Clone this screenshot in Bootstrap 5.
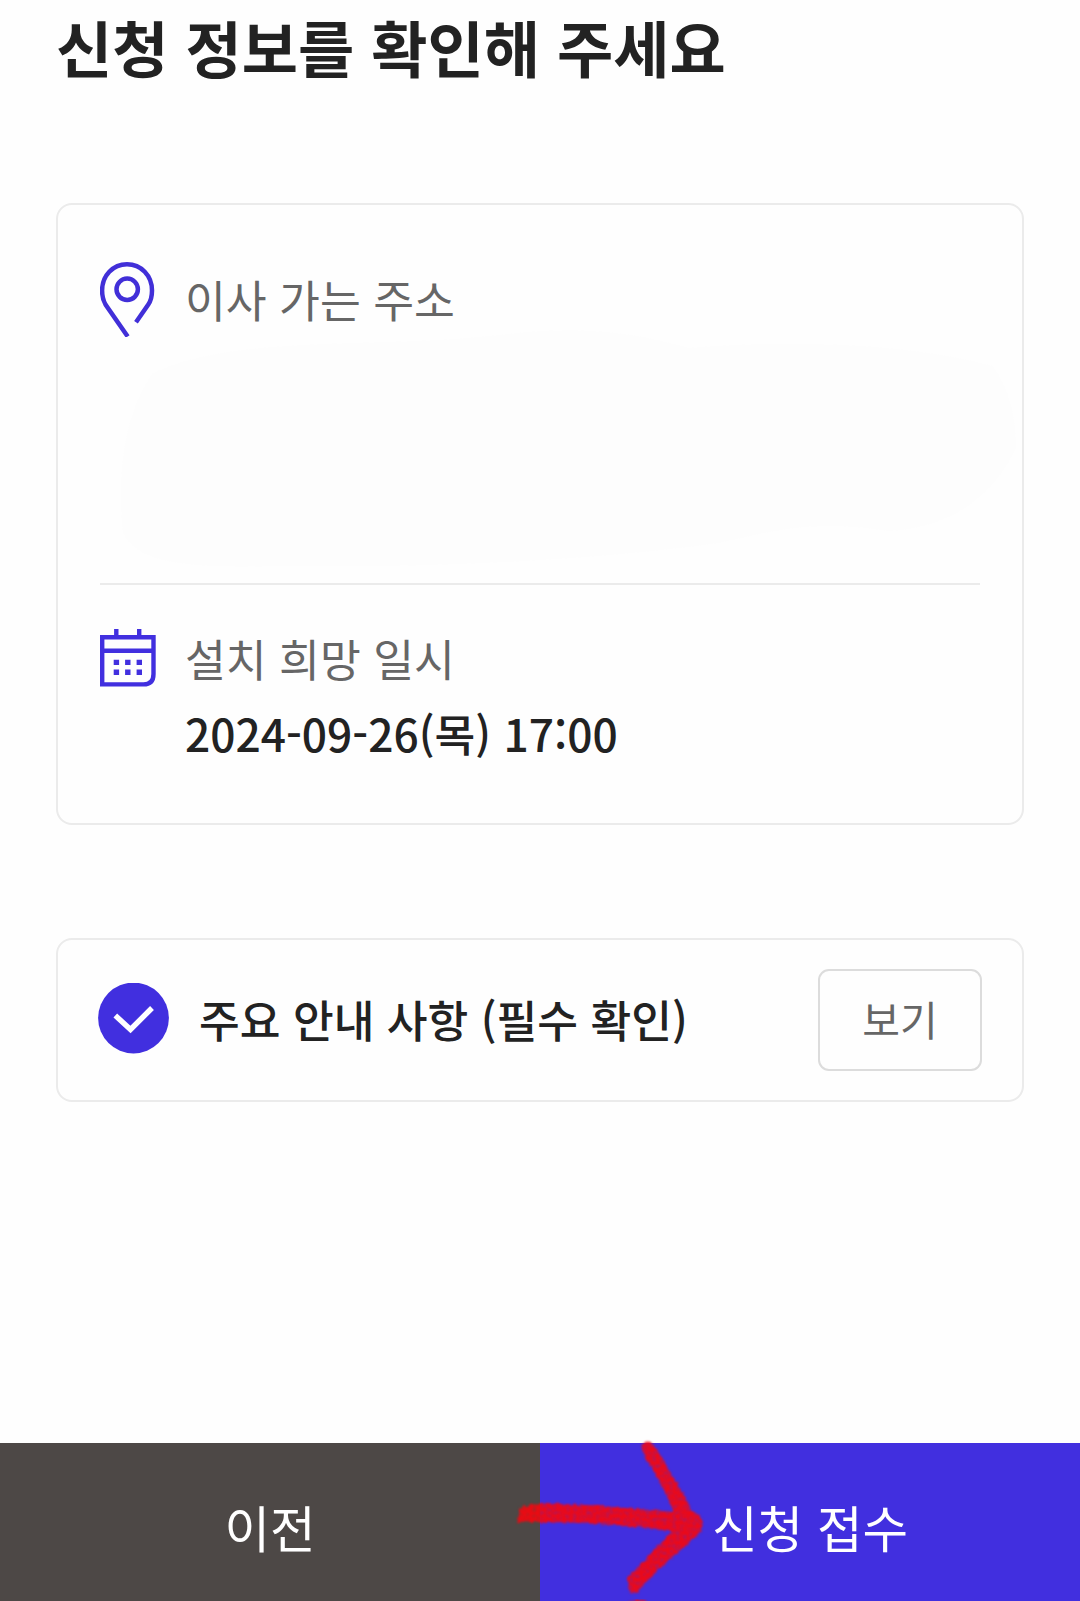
<!DOCTYPE html>
<html lang="ko">
<head>
<meta charset="utf-8">
<meta name="viewport" content="width=device-width, initial-scale=1">
<title>신청 정보 확인</title>
<link href="https://cdn.jsdelivr.net/npm/bootstrap@5.3.0/dist/css/bootstrap.min.css" rel="stylesheet">
<style>
body{font-family:"Noto Sans CJK KR","Noto Sans",sans-serif;background:#fefefe;color:#222;height:1601px;overflow:hidden}
.page-title{font-size:61.1px;font-weight:700;line-height:90px;padding:2px 0 0;margin-bottom:111px}
.screen{height:1601px}
.content{padding:0 56px}
.panel{border:2px solid #ebebeb;border-radius:16px;background:#fefefe}
.info-panel{height:622px;padding:0 42px}
.address-block{height:380px;border-bottom:2px solid #ebebeb;padding-top:54px}
.schedule-block{padding-top:44px}
.icon-cell{width:85px}
.label-text{font-size:44.4px;line-height:64px;color:#666}
.schedule-text{margin-top:-3px}
.date-text{font-size:44.3px;line-height:70px;font-weight:500;margin-top:8px}
.notice-panel{height:164px;margin-top:113px;padding:0 40px}
.notice-text{font-size:44.3px;font-weight:500;line-height:64px;margin:0 0 2px 30px}
.view-btn{width:164px;height:102px;border:2px solid #dcdcdc;border-radius:11px;color:#666;font-size:41px;line-height:60px;background:#fefefe}
.action-btn{height:158px;font-size:49.5px;line-height:72px;color:#fff;border-radius:0;border:0;padding:10px 0 0}
.prev-btn,.prev-btn:hover{background:#4d4846;color:#fff}
.submit-btn,.submit-btn:hover{background:#412fdf;color:#fff}
.arrow-mark{left:510px;top:1435px;pointer-events:none}
.smudge{left:108px;top:328px;pointer-events:none}
</style>
</head>
<body>
<div class="screen d-flex flex-column position-relative">
<main class="content flex-grow-1">
  <h1 class="page-title">신청 정보를 확인해 주세요</h1>
  <section class="panel info-panel">
    <div class="address-block d-flex align-items-start">
      <div class="icon-cell flex-shrink-0">
        <svg class="d-block" width="56" height="78" viewBox="0 0 56 78" fill="none" stroke="#412fd8" stroke-width="4.5"><path d="M27.7 77.5 5.5 45.5C3.2 41.5 2.1 37 2.1 31.5C2.1 16.5 13 5.2 27 5.2S52 16.5 52 31.5C52 37 51 41.5 48.3 45.5L36 63.3"/><circle cx="27.2" cy="30.3" r="10.7"/></svg>
      </div>
      <div class="label-text mt-2">이사 가는 주소</div>
    </div>
    <div class="schedule-block d-flex align-items-start">
      <div class="icon-cell flex-shrink-0">
        <svg class="d-block" width="56" height="58" viewBox="0 0 56 58" fill="none" stroke="#412fdf" stroke-width="4.4"><path d="M2.2 8.2H53.5V45Q53.5 55.4 43.5 55.4H2.2ZM2.2 21.8H53.5M16.3 0V8M39.2 0V8"/><path stroke-width="5.4" d="M13.7 33.4h5.4M25.1 33.4h5.4M36.6 33.4h5.4M13.7 43.3h5.4M25.1 43.3h5.4M36.6 43.3h5.4"/></svg>
      </div>
      <div class="schedule-text">
        <div class="label-text">설치 희망 일시</div>
        <div class="date-text">2024-09-26(목) 17:00</div>
      </div>
    </div>
  </section>
  <section class="panel notice-panel d-flex align-items-center">
    <svg class="flex-shrink-0" width="71" height="74" viewBox="0 0 71 74"><circle cx="35.5" cy="35" r="35.4" fill="#412fdf"/><path d="M17.3 32.5 32.5 46.5 54 25" fill="none" stroke="#fff" stroke-width="5.4"/></svg>
    <div class="notice-text">주요 안내 사항 (필수 확인)</div>
    <button class="btn view-btn ms-auto p-0 pb-1" type="button">보기</button>
  </section>
</main>
<footer class="row g-0">
  <div class="col-6"><button class="btn action-btn prev-btn w-100" type="button">이전</button></div>
  <div class="col-6"><button class="btn action-btn submit-btn w-100" type="button">신청 접수</button></div>
</footer>
<svg class="smudge position-absolute" width="912" height="240" viewBox="0 0 912 240"><path fill="#fdfdfd" d="M45 45C130 5 270 22 400 6C480-4 540 8 580 20C700 10 810 18 885 38Q908 70 908 120C890 160 850 200 780 203C700 190 660 205 610 215C490 232 330 240 170 238C80 240 30 236 15 205C10 160 12 90 45 45Z"/></svg>
<svg class="arrow-mark position-absolute" width="200" height="166" viewBox="0 0 200 166" fill="#f20710" fill-opacity=".96">
  <defs><filter id="crayon" color-interpolation-filters="sRGB" x="-5%" y="-5%" width="110%" height="110%"><feTurbulence type="fractalNoise" baseFrequency=".3" numOctaves="2" seed="4" result="n"/><feDisplacementMap in="SourceGraphic" in2="n" scale="5" xChannelSelector="R" yChannelSelector="G" result="d"/><feColorMatrix in="n" type="matrix" values="0 0 0 0 0  0 0 0 0 0  0 0 0 0 0  0 0 1.2 0 .35" result="g"/><feComposite in="d" in2="g" operator="in"/><feGaussianBlur stdDeviation=".8"/></filter></defs>
  <path filter="url(#crayon)" d="M9 73Q20 68 42 69C80 69 124 74 164 77C157 59 148 43 138 27Q130 15 132 9L138 6L144 10C157 31 169 51 182 76Q192 80 192 87Q193 94 189 99L152 131L126 158L119 156L117 144C133 127 148 111 162 96C119 90 79 88 40 87L8 87Z"/>
  <path filter="url(#crayon)" d="M118 168Q128 162 139 168Z"/>
</svg>
</div>
<script src="https://cdn.jsdelivr.net/npm/bootstrap@5.3.0/dist/js/bootstrap.bundle.min.js"></script>
</body>
</html>
